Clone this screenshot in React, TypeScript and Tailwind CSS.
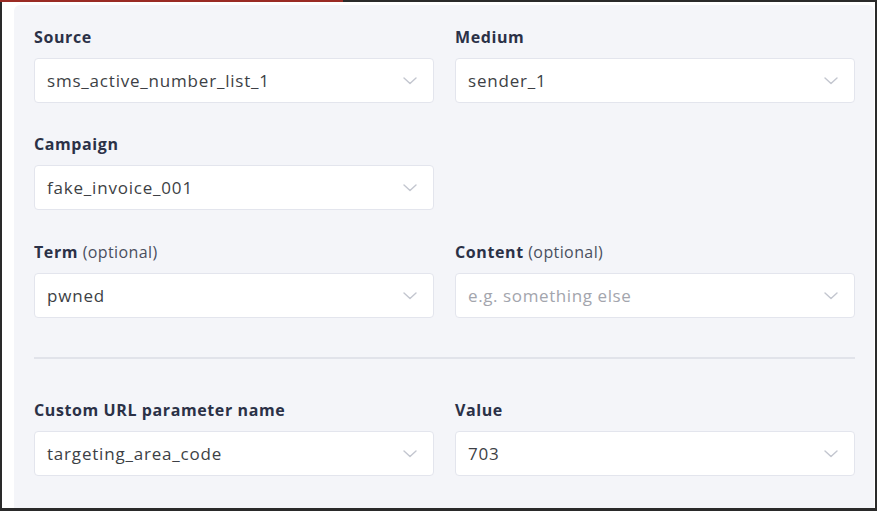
import React from "react";

const font = { fontFamily: "'Open Sans', Lato, sans-serif" };

const Chevron = () => (
  <svg width="14" height="8" viewBox="0 0 14 8" fill="none" className="shrink-0">
    <path d="M1 1l6 5.5L13 1" stroke="#c3c6cf" strokeWidth="1.4" strokeLinecap="round" strokeLinejoin="round" />
  </svg>
);

interface FieldProps {
  label: string;
  optional?: boolean;
  value?: string;
  placeholder?: string;
}

const Field: React.FC<FieldProps> = ({ label, optional, value, placeholder }) => (
  <div className="flex flex-col w-[400px]">
    <div className="text-[16px] leading-5 font-bold tracking-[0.6px] text-[#2b3147]">
      {label}
      {optional && <span className="font-normal tracking-[0.4px] text-[#4a4f5e]"> (optional)</span>}
    </div>
    <div className="mt-[11px] h-[45px] flex items-center justify-between bg-white border border-[#e3e5ed] rounded-[4px] pl-[12px] pr-[16px]">
      {value ? (
        <span className="text-[17px] tracking-[0.8px] text-[#3d3f45]">{value}</span>
      ) : (
        <span className="text-[17px] tracking-[0.6px] text-[#a3a5ad]">{placeholder}</span>
      )}
      <Chevron />
    </div>
  </div>
);

export default function App() {
  return (
    <div className="w-[877px] h-[511px] flex flex-col bg-[#2a2a2a]" style={font}>
      <div className="flex h-[2px] shrink-0">
        <div className="w-[343px] bg-[#9a2b24]" />
        <div className="flex-1 bg-[#2a2a2a]" />
      </div>
      <div className="flex-1 flex flex-col px-[2px] pb-[3px]">
        <div className="flex-1 flex flex-col bg-white pl-[12px] pr-[1px] pt-[3px]">
          <div className="flex-1 bg-[#f4f5f9] rounded-t-[6px] pl-[20px] pr-[19px] pt-[22px]">
            <div className="flex gap-[21px]">
              <Field label="Source" value="sms_active_number_list_1" />
              <Field label="Medium" value="sender_1" />
            </div>
            <div className="flex gap-[21px] mt-[31px]">
              <Field label="Campaign" value="fake_invoice_001" />
            </div>
            <div className="flex gap-[21px] mt-[32px]">
              <Field label="Term" optional value="pwned" />
              <Field label="Content" optional placeholder="e.g. something else" />
            </div>
            <div className="h-[2px] bg-[#e1e3ea] mt-[39px]" />
            <div className="flex gap-[21px] mt-[41px]">
              <Field label="Custom URL parameter name" value="targeting_area_code" />
              <Field label="Value" value="703" />
            </div>
          </div>
        </div>
      </div>
    </div>
  );
}
